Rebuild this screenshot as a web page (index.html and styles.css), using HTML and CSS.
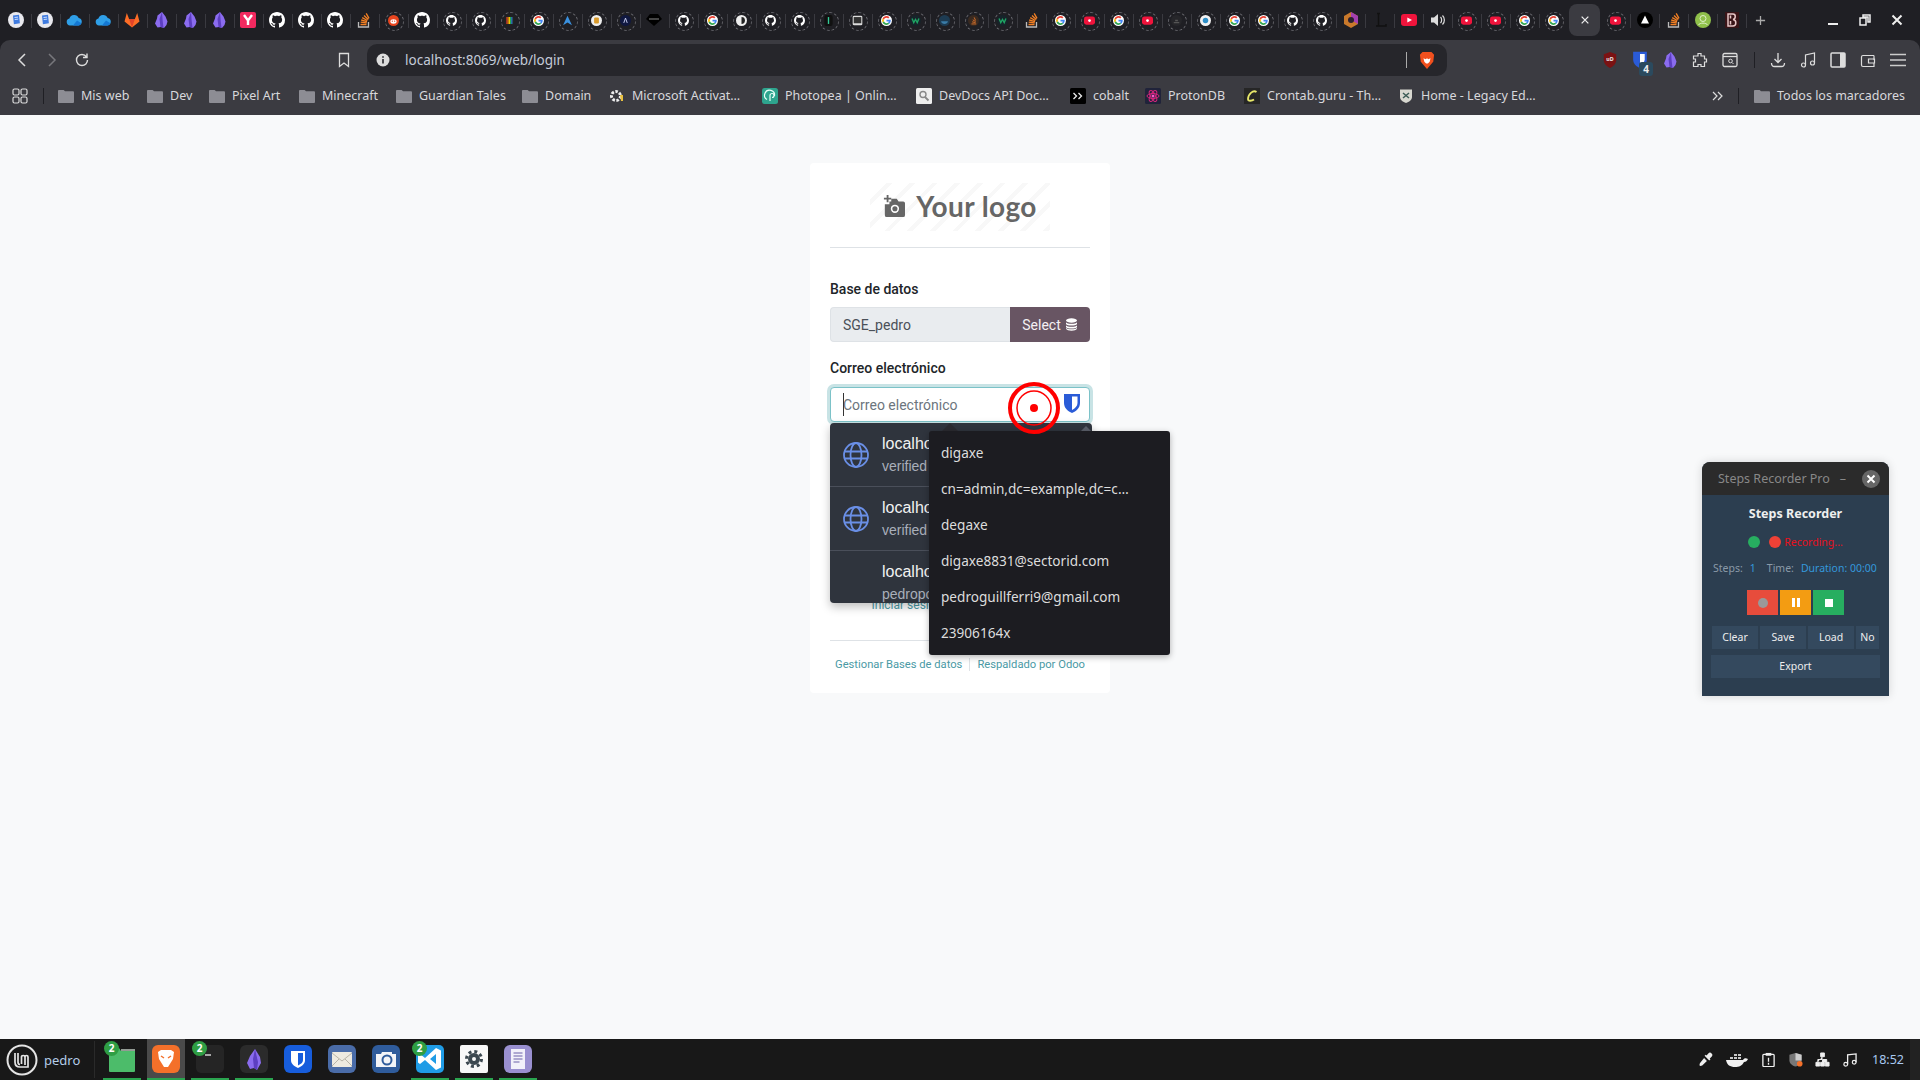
FILE: index.html
```html
<!DOCTYPE html>
<html lang="es">
<head>
  <meta charset="utf-8">
  <title>Odoo - Login</title>
  <link rel="stylesheet" href="styles.css">
</head>
<body>
  <!-- iconos compartidos -->
  <svg class="sprite" aria-hidden="true">
    <symbol id="gh" viewBox="0 0 16 16"><path fill="#fff" d="M8 0C3.58 0 0 3.58 0 8c0 3.54 2.29 6.53 5.47 7.59.4.07.55-.17.55-.38 0-.19-.01-.82-.01-1.49-2.01.37-2.53-.49-2.69-.94-.09-.23-.48-.94-.82-1.13-.28-.15-.68-.52-.01-.53.63-.01 1.08.58 1.23.82.72 1.21 1.87.87 2.33.66.07-.52.28-.87.51-1.07-1.78-.2-3.64-.89-3.64-3.95 0-.87.31-1.59.82-2.15-.08-.2-.36-1.02.08-2.12 0 0 .67-.21 2.2.82.64-.18 1.32-.27 2-.27.68 0 1.36.09 2 .27 1.53-1.04 2.2-.82 2.2-.82.44 1.1.16 1.92.08 2.12.51.56.82 1.27.82 2.15 0 3.07-1.87 3.75-3.65 3.95.29.25.54.73.54 1.48 0 1.07-.01 1.93-.01 2.2 0 .21.15.46.55.38A8.013 8.013 0 0016 8c0-4.42-3.58-8-8-8z"/></symbol>
    <symbol id="goo" viewBox="-6 -6 60 60"><circle cx="24" cy="24" r="30" fill="#fff"/><path fill="#EA4335" d="M24 9.5c3.54 0 6.71 1.22 9.21 3.6l6.85-6.85C35.9 2.38 30.47 0 24 0 14.62 0 6.51 5.38 2.56 13.22l7.98 6.19C12.43 13.72 17.74 9.5 24 9.5z"/><path fill="#4285F4" d="M46.98 24.55c0-1.57-.15-3.09-.38-4.55H24v9.02h12.94c-.58 2.96-2.26 5.48-4.78 7.18l7.73 6c4.51-4.18 7.09-10.36 7.09-17.65z"/><path fill="#FBBC05" d="M10.53 28.59c-.48-1.45-.76-2.99-.76-4.59s.27-3.14.76-4.59l-7.98-6.19C.92 16.46 0 20.12 0 24c0 3.88.92 7.54 2.56 10.78l7.97-6.19z"/><path fill="#34A853" d="M24 48c6.48 0 11.93-2.13 16.03-5.81l-7.73-6c-2.15 1.45-4.92 2.3-8.3 2.3-6.26 0-11.57-4.22-13.47-9.91l-7.98 6.19C6.51 42.62 14.62 48 24 48z"/></symbol>
    <symbol id="yt" viewBox="0 0 16 16"><rect y="2" width="16" height="12" rx="3" fill="#f0143c"/><path d="M6.3 5.4 11 8l-4.7 2.6z" fill="#fff"/></symbol>
    <symbol id="ytr" viewBox="0 0 16 16"><rect y="2" width="16" height="12" rx="3.5" fill="#f0143c"/><circle cx="8" cy="8" r="2" fill="#fff"/></symbol>
    <symbol id="so" viewBox="0 0 16 16"><path d="M2.5 10v5h10v-5" fill="none" stroke="#bcbbbb" stroke-width="1.3"/><path d="M4.5 12.5h6M4.7 10.2l6 .6M5.2 8l5.8 1.6M6.2 5.6l5.2 2.9M8 3.4l4.3 4M10.2 1.4l2.8 5" stroke="#f48024" stroke-width="1.3" fill="none"/></symbol>
    <symbol id="note" viewBox="0 0 16 16"><circle cx="8" cy="8" r="8" fill="#e9e9ee"/><path d="M5 3.5l6-.8.9 8.500-6 1z" fill="#3f7be0"/><path d="M6.5 5.5l3.5-.4M6.7 7.500l3.500-.4" stroke="#cfe0ff"/></symbol>
    <symbol id="cloud" viewBox="0 0 16 16"><path d="M4 13.5a3.5 3.5 0 0 1-.6-6.900A5 5 0 0 1 12.700 6a3.800 3.800 0 0 1-.2 7.500z" fill="#2f9fe8"/><path d="M7 13.5 11 8.500l4 2.500c0 1.500-1 2.500-2.500 2.500z" fill="#1478d4"/></symbol>
    <symbol id="gl" viewBox="0 0 16 16"><path d="M8 15.500 .5 9.500 2.800 1l2.300 6h5.800L13.200 1l2.300 8.500z" fill="#fc6d26"/><path d="M8 15.500 5.100 7h5.800z" fill="#e24329"/></symbol>
    <symbol id="obs" viewBox="0 0 16 16"><path d="M9 0l3.500 4.500 2 5-1 3.500-2.500 3-3-1-3.500.5-2.500-4 2-5 .5-3z" fill="#8b6cef"/><path d="M9 0 6.500 7l1 8 3 1-.8-7z" fill="#5d3fc2"/></symbol>
    <symbol id="yc" viewBox="0 0 16 16"><rect width="16" height="16" rx="2" fill="#f2295f"/><path d="M4 3l4 5.500L12 3M8 8.500V13" fill="none" stroke="#fff" stroke-width="2.400"/></symbol>
    <symbol id="red" viewBox="0 0 16 16"><circle cx="8" cy="8" r="8" fill="#e8451f"/><ellipse cx="8" cy="9.500" rx="4.500" ry="3.200" fill="#fff"/><circle cx="6.300" cy="9" r=".9" fill="#e8451f"/><circle cx="9.700" cy="9" r=".9" fill="#e8451f"/></symbol>
    <symbol id="rbw" viewBox="0 0 16 16"><circle cx="8" cy="8" r="8" fill="#222"/><path d="M3.500 3h1.500v10H3.500z" fill="#e33"/><path d="M5.300 3h1.500v10H5.300z" fill="#f90"/><path d="M7.100 3h1.500v10H7.100z" fill="#fd0"/><path d="M8.900 3h1.500v10H8.900z" fill="#2b5"/><path d="M10.700 3h1.500v10h-1.500z" fill="#38e"/></symbol>
    <symbol id="arch" viewBox="0 0 16 16"><path d="M8 1 14.500 15 8 11 1.500 15z" fill="#3a91e0"/></symbol>
    <symbol id="amb" viewBox="0 0 16 16"><circle cx="8" cy="8" r="8" fill="#eee"/><rect x="4.500" y="3.500" width="7" height="9" rx="1.500" fill="#d99a2b"/></symbol>
    <symbol id="adk" viewBox="0 0 16 16"><circle cx="8" cy="8" r="8" fill="#101840"/><path d="M5.500 11.500 8 4.500l2.500 7" fill="none" stroke="#d6dcff" stroke-width="1.300"/></symbol>
    <symbol id="ec" viewBox="0 0 16 16"><path d="M4 2h8l4 5-8 7-8-7z" fill="#000"/><path d="M3 7h10" stroke="#888"/></symbol>
    <symbol id="half" viewBox="0 0 16 16"><circle cx="8" cy="8" r="8" fill="#eee"/><path d="M8 3a5 5 0 0 1 0 10z" fill="#222"/></symbol>
    <symbol id="tg" viewBox="0 0 16 16"><rect x="2" width="12" height="16" rx="3" fill="#111"/><path d="M8 3v10" stroke="#3c9" stroke-width="2"/></symbol>
    <symbol id="gray" viewBox="0 0 16 16"><rect x="1" y="1" width="14" height="14" rx="2" fill="#ddd"/><rect x="2.500" y="3" width="11" height="9" fill="#333"/></symbol>
    <symbol id="w" viewBox="0 0 16 16"><circle cx="8" cy="8" r="8" fill="#16242a"/><path d="M3 5l2.500 6L8 6.500 10.500 11 13 5" fill="none" stroke="#1fa463" stroke-width="2"/></symbol>
    <symbol id="blu" viewBox="0 0 16 16"><circle cx="8" cy="8" r="8" fill="#1d3b52"/><path d="M3 9h10c-.5 2.500-2.500 4-5 4S3.500 11.500 3 9z" fill="#3a7ca8"/></symbol>
    <symbol id="org" viewBox="0 0 16 16"><circle cx="8" cy="8" r="8" fill="#3a2a20"/><path d="M5 13h7M6 10l5 1M7 7l4 2.500M9 3.500l2 4.500" stroke="#d9712b" stroke-width="1.400"/></symbol>
    <symbol id="drk" viewBox="0 0 16 16"><circle cx="8" cy="8" r="8" fill="#26262a"/><path d="M4 11h8M6 8h4" stroke="#555" stroke-width="2"/></symbol>
    <symbol id="bdot" viewBox="0 0 16 16"><circle cx="8" cy="8" r="8" fill="#f2f2f2"/><circle cx="8" cy="8" r="4" fill="#2f8fc8"/></symbol>
    <symbol id="hex" viewBox="0 0 16 16"><path d="M8 0l7 4v8l-7 4-7-4V4z" fill="#c9792b"/><path d="M8 0l7 4v8l-7-4z" fill="#a43fb0"/><circle cx="8" cy="8" r="3" fill="#2b2030"/></symbol>
    <symbol id="tri" viewBox="0 0 16 16"><circle cx="8" cy="8" r="8" fill="#000"/><path d="M8 3.500l4 8H4z" fill="#fff"/></symbol>
    <symbol id="ava" viewBox="0 0 16 16"><circle cx="8" cy="8" r="8" fill="#8fc04a"/><circle cx="8" cy="6.500" r="3" fill="none" stroke="#dff0c8"/><path d="M3.500 13c1-2.500 8-2.500 9 0" fill="none" stroke="#dff0c8"/></symbol>
    <symbol id="bl" viewBox="0 0 16 16"><rect x="1" width="14" height="16" fill="#3a1518"/><path d="M4 2h5c3 0 3 5 0 5.500 4 .5 3.500 6.500 0 6.500H4zM6.500 3.500v3M6.500 9v3.500" fill="none" stroke="#e8c8c8" stroke-width="1.500"/></symbol>
    <symbol id="ll" viewBox="0 0 16 16"><path d="M5 1.500h3M6.500 1.500V14M4 14h10v-2" fill="none" stroke="#111" stroke-width="1.500"/></symbol>
    <symbol id="shield" viewBox="0 0 18 21"><path d="M1 1h16v9c0 5-4 8.500-8 10-4-1.500-8-5-8-10z" fill="#2a5bd7"/><path d="M9 3.500h5.500V10c0 3-2.500 5.500-5.500 7z" fill="#fff"/></symbol>
    <symbol id="folder" viewBox="0 0 17 15"><path d="M0 2a1 1 0 0 1 1-1h5l1.500 1.500H16a1 1 0 0 1 1 1V14a1 1 0 0 1-1 1H1a1 1 0 0 1-1-1z" fill="#8d8d94"/></symbol>
    <symbol id="globe" viewBox="0 0 26 26"><g fill="none" stroke="#6a8fe6" stroke-width="1.800"><circle cx="13" cy="13" r="12"/><ellipse cx="13" cy="13" rx="5.500" ry="12"/><path d="M1.500 9.500h23M1.500 16.500h23"/></g></symbol>
  </svg>

  <header class="browser">
    <div class="tabstrip">
      <div class="tab"><svg><use href="#note"/></svg></div>
      <div class="tab"><svg><use href="#note"/></svg></div>
      <div class="tab"><svg><use href="#cloud"/></svg></div>
      <div class="tab"><svg><use href="#cloud"/></svg></div>
      <div class="tab"><svg><use href="#gl"/></svg></div>
      <div class="tab"><svg><use href="#obs"/></svg></div>
      <div class="tab"><svg><use href="#obs"/></svg></div>
      <div class="tab"><svg><use href="#obs"/></svg></div>
      <div class="tab"><svg><use href="#yc"/></svg></div>
      <div class="tab"><svg><use href="#gh"/></svg></div>
      <div class="tab"><svg><use href="#gh"/></svg></div>
      <div class="tab"><svg><use href="#gh"/></svg></div>
      <div class="tab"><svg><use href="#so"/></svg></div>
      <div class="tab ring"><svg><use href="#red"/></svg></div>
      <div class="tab"><svg><use href="#gh"/></svg></div>
      <div class="tab ring"><svg><use href="#gh"/></svg></div>
      <div class="tab ring"><svg><use href="#gh"/></svg></div>
      <div class="tab ring"><svg><use href="#rbw"/></svg></div>
      <div class="tab ring"><svg><use href="#goo"/></svg></div>
      <div class="tab ring"><svg><use href="#arch"/></svg></div>
      <div class="tab ring"><svg><use href="#amb"/></svg></div>
      <div class="tab ring"><svg><use href="#adk"/></svg></div>
      <div class="tab"><svg><use href="#ec"/></svg></div>
      <div class="tab ring"><svg><use href="#gh"/></svg></div>
      <div class="tab ring"><svg><use href="#goo"/></svg></div>
      <div class="tab ring"><svg><use href="#half"/></svg></div>
      <div class="tab ring"><svg><use href="#gh"/></svg></div>
      <div class="tab ring"><svg><use href="#gh"/></svg></div>
      <div class="tab ring"><svg><use href="#tg"/></svg></div>
      <div class="tab ring"><svg><use href="#gray"/></svg></div>
      <div class="tab ring"><svg><use href="#goo"/></svg></div>
      <div class="tab ring"><svg><use href="#w"/></svg></div>
      <div class="tab ring"><svg><use href="#blu"/></svg></div>
      <div class="tab ring"><svg><use href="#org"/></svg></div>
      <div class="tab ring"><svg><use href="#w"/></svg></div>
      <div class="tab"><svg><use href="#so"/></svg></div>
      <div class="tab ring"><svg><use href="#goo"/></svg></div>
      <div class="tab ring"><svg><use href="#ytr"/></svg></div>
      <div class="tab ring"><svg><use href="#goo"/></svg></div>
      <div class="tab ring"><svg><use href="#ytr"/></svg></div>
      <div class="tab ring"><svg><use href="#drk"/></svg></div>
      <div class="tab ring"><svg><use href="#bdot"/></svg></div>
      <div class="tab ring"><svg><use href="#goo"/></svg></div>
      <div class="tab ring"><svg><use href="#goo"/></svg></div>
      <div class="tab ring"><svg><use href="#gh"/></svg></div>
      <div class="tab ring"><svg><use href="#gh"/></svg></div>
      <div class="tab"><svg><use href="#hex"/></svg></div>
      <div class="tab"><svg><use href="#ll"/></svg></div>
      <div class="tab"><svg><use href="#yt"/></svg></div>
      <div class="tab"><svg viewBox="0 0 16 16"><path d="M1 5.500h3L8 2v12l-4-3.500H1z" fill="#ddd"/><path d="M10.500 5c1.500 1.500 1.500 4.500 0 6M12.500 3.500c2.500 2.500 2.500 6.500 0 9" fill="none" stroke="#ddd" stroke-width="1.200"/></svg></div>
      <div class="tab ring"><svg><use href="#ytr"/></svg></div>
      <div class="tab ring"><svg><use href="#ytr"/></svg></div>
      <div class="tab ring"><svg><use href="#goo"/></svg></div>
      <div class="tab ring"><svg><use href="#goo"/></svg></div>
      <div class="tab active"><svg viewBox="0 0 12 12"><path d="M2 2l8 8M10 2l-8 8" stroke="#eee" stroke-width="1.500"/></svg></div>
      <div class="tab ring"><svg><use href="#ytr"/></svg></div>
      <div class="tab"><svg><use href="#tri"/></svg></div>
      <div class="tab"><svg><use href="#so"/></svg></div>
      <div class="tab"><svg><use href="#ava"/></svg></div>
      <div class="tab"><svg><use href="#bl"/></svg></div>
      <div class="tab newtab"><svg viewBox="0 0 12 12"><path d="M6 1v10M1 6h10" stroke="#aaa" stroke-width="1.400"/></svg></div>
      <div class="winctl">
        <svg viewBox="0 0 12 12"><path d="M1 10h10" stroke="#eee" stroke-width="2"/></svg>
        <svg viewBox="0 0 12 12"><path d="M4 1h7v7H9V3H4zM1 4h6v7H1z" fill="none" stroke="#eee" stroke-width="1.500"/></svg>
        <svg viewBox="0 0 12 12"><path d="M1.500 1.500l9 9M10.500 1.500l-9 9" stroke="#eee" stroke-width="2"/></svg>
      </div>
    </div>

    <div class="toolbar">
      <button class="tool"><svg viewBox="0 0 16 16"><path d="M11 2 5 8l6 6" fill="none" stroke="#ddd" stroke-width="1.500"/></svg></button>
      <button class="tool"><svg viewBox="0 0 16 16"><path d="M5 2l6 6-6 6" fill="none" stroke="#77777c" stroke-width="1.500"/></svg></button>
      <button class="tool"><svg viewBox="0 0 16 16"><path d="M13.500 8A5.500 5.500 0 1 1 8 2.500c2 0 3.500 1 4.500 2.500M13 1.500V5.500H9" fill="none" stroke="#ddd" stroke-width="1.400"/></svg></button>
      <button class="tool bookmark"><svg viewBox="0 0 16 16"><path d="M3.500 1.500h9V14.500L8 11l-4.500 3.500z" fill="none" stroke="#ddd" stroke-width="1.300"/></svg></button>
      <div class="omnibox">
        <svg class="info" viewBox="0 0 14 14"><circle cx="7" cy="7" r="6.500" fill="#ddd"/><path d="M7 6v4.500M7 3.200v1.500" stroke="#26262b" stroke-width="1.600"/></svg>
        <span class="url">localhost:8069/web/login</span>
        <span class="omni-div"></span>
        <svg class="lion" viewBox="0 0 18 21"><path d="M4 1h10l3 3-1 8-7 8-7-8-1-8z" fill="#f1501e"/><path d="M5 8l2.500 1L9 8l1.500 1L13 8l-1 4-2 2H8l-2-2z" fill="#fff"/></svg>
      </div>
      <button class="tool ext-first"><svg viewBox="0 0 16 18"><path d="M8 0l7 2.500V9c0 4-3 7-7 9-4-2-7-5-7-9V2.500z" fill="#7a1213"/><text x="8" y="10.500" class="ublock">uD</text></svg></button>
      <button class="tool badged"><svg><use href="#shield"/></svg><span class="badge">4</span></button>
      <button class="tool"><svg><use href="#obs"/></svg></button>
      <button class="tool"><svg viewBox="0 0 16 16"><path d="M6 1.500h3v2.500h3.500v3h2v3h-2v4.500H9v-2H6v2H1.500V10h2V7h-2V4H6z" fill="none" stroke="#ddd" stroke-width="1.200"/></svg></button>
      <button class="tool"><svg viewBox="0 0 16 16"><rect x="1" y="1.500" width="14" height="13" rx="1.500" fill="none" stroke="#ddd" stroke-width="1.300"/><path d="M1 4.500h14" stroke="#ddd" stroke-width="1.300"/><circle cx="8.500" cy="9" r="1.800" fill="none" stroke="#ddd"/><path d="M10 10.500l1.500 1.500" stroke="#ddd"/></svg></button>
      <span class="tool-div"></span>
      <button class="tool"><svg viewBox="0 0 16 16"><path d="M8 1v9M4.500 7 8 10.500 11.500 7M1.500 11c0 2 1 3.500 3 3.500h7c2 0 3-1.500 3-3.500" fill="none" stroke="#ddd" stroke-width="1.300"/></svg></button>
      <button class="tool"><svg viewBox="0 0 16 16"><circle cx="3.500" cy="13" r="2" fill="none" stroke="#ddd" stroke-width="1.200"/><circle cx="12.500" cy="11" r="2" fill="none" stroke="#ddd" stroke-width="1.200"/><path d="M5.500 13V3l9-2v10" fill="none" stroke="#ddd" stroke-width="1.200"/></svg></button>
      <button class="tool"><svg viewBox="0 0 16 16"><rect x="1" y="1" width="14" height="14" rx="1" fill="none" stroke="#ddd" stroke-width="1.500"/><rect x="10" y="1" width="5" height="14" fill="#ddd"/></svg></button>
      <button class="tool"><svg viewBox="0 0 16 16"><path d="M14 3.500H3A1.500 1.500 0 0 0 1.500 5v8A1.500 1.500 0 0 0 3 14.500h11V11M14 8V3.500M8.500 7h6v4h-6z" fill="none" stroke="#ddd" stroke-width="1.200"/></svg></button>
      <button class="tool"><svg viewBox="0 0 16 16"><path d="M0 2.500h16M0 8h16M0 13.500h16" stroke="#ccc" stroke-width="1.500"/></svg></button>
    </div>

    <nav class="bookmarks">
      <span class="bm apps"><svg viewBox="0 0 16 16"><g fill="none" stroke="#ddd" stroke-width="1.200"><rect x="1" y="1" width="6" height="6" rx="1.500"/><rect x="9" y="1" width="6" height="6" rx="1.500"/><rect x="1" y="9" width="6" height="6" rx="1.500"/><rect x="9" y="9" width="6" height="6" rx="1.500"/></g></svg></span>
      <span class="bm-div"></span>
      <span class="bm"><svg><use href="#folder"/></svg>Mis web</span>
      <span class="bm"><svg><use href="#folder"/></svg>Dev</span>
      <span class="bm"><svg><use href="#folder"/></svg>Pixel Art</span>
      <span class="bm"><svg><use href="#folder"/></svg>Minecraft</span>
      <span class="bm"><svg><use href="#folder"/></svg>Guardian Tales</span>
      <span class="bm"><svg><use href="#folder"/></svg>Domain</span>
      <span class="bm"><svg viewBox="0 0 16 16"><circle cx="7" cy="8" r="4.500" fill="none" stroke="#eee" stroke-width="3" stroke-dasharray="2.500 1.500"/><path d="M11 7h3v6h-2z" fill="#e8c040"/></svg>Microsoft Activat…</span>
      <span class="bm"><svg viewBox="0 0 16 16"><rect width="16" height="16" rx="2.500" fill="#2ea58e"/><path d="M8 13V7.500a2 2 0 1 1 2 2M5 11.500A5 5 0 1 1 12.500 8" fill="none" stroke="#e8fff8" stroke-width="1.200"/></svg>Photopea | Onlin…</span>
      <span class="bm"><svg viewBox="0 0 16 16"><rect width="16" height="16" rx="1.500" fill="#eee"/><circle cx="7" cy="6.500" r="3" fill="none" stroke="#888" stroke-width="1.400"/><path d="M9 9l3.500 3.500" stroke="#888" stroke-width="1.800"/></svg>DevDocs API Doc…</span>
      <span class="bm"><svg viewBox="0 0 16 16"><rect width="16" height="16" rx="1.500" fill="#000"/><path d="M3.500 5l3 3-3 3M8.500 5l3 3-3 3" fill="none" stroke="#eee" stroke-width="1.300"/></svg>cobalt</span>
      <span class="bm"><svg viewBox="0 0 16 16"><rect width="16" height="16" rx="1.500" fill="#20233a"/><g fill="none" stroke="#d6247c"><ellipse cx="8" cy="8" rx="6" ry="2.500"/><ellipse cx="8" cy="8" rx="6" ry="2.500" transform="rotate(60 8 8)"/><ellipse cx="8" cy="8" rx="6" ry="2.500" transform="rotate(120 8 8)"/></g><circle cx="8" cy="8" r="1.500" fill="#f5c"/></svg>ProtonDB</span>
      <span class="bm"><svg viewBox="0 0 16 16"><rect width="16" height="16" fill="#262626"/><path d="M12.500 4C9 1.500 4 6.500 4 11c0 2.500 4 2 6 .5" fill="none" stroke="#e8e86a" stroke-width="1.800"/></svg>Crontab.guru - Th…</span>
      <span class="bm"><svg viewBox="0 0 16 16"><path d="M2 1.500h12V9c0 3-3 5-6 6-3-1-6-3-6-6z" fill="#d8d8d0"/><path d="M5 5l6 5M11 5l-6 5" stroke="#3b5b55" stroke-width="1.500"/></svg>Home - Legacy Ed…</span>
      <span class="bm-end">
        <svg class="chev" viewBox="0 0 12 12"><path d="M2 2l4 4-4 4M7 2l4 4-4 4" fill="none" stroke="#ddd" stroke-width="1.200"/></svg>
        <span class="bm-div"></span>
        <span class="bm"><svg><use href="#folder"/></svg>Todos los marcadores</span>
      </span>
    </nav>
  </header>

  <main class="page">
    <div class="card">
      <div class="logo">
        <svg class="logo-cam" viewBox="0 0 24 24"><path d="M4 0v3H1v2h3v3h2V5h3V3H6V0z" fill="#666"/><path d="M9 4h6l2 3h5a2 2 0 0 1 2 2v13a2 2 0 0 1-2 2H4a2 2 0 0 1-2-2V10h5V7h2z" fill="#666"/><circle cx="13" cy="15" r="4.500" fill="#fff"/><circle cx="13" cy="15" r="2.800" fill="#666"/></svg>
        <span>Your logo</span>
      </div>

      <form class="login">
        <label class="lbl">Base de datos</label>
        <div class="db-row">
          <input class="db-input" value="SGE_pedro" readonly>
          <a class="db-btn">Select <svg viewBox="0 0 13 13"><g fill="#fff"><ellipse cx="6.500" cy="2.500" rx="5.500" ry="2.200"/><path d="M1 4.200c1 2 10 2 11 0V6c-1 2-10 2-11 0zM1 7.200c1 2 10 2 11 0V9c-1 2-10 2-11 0zM1 9.800c1 2 10 2 11 0v1c-1 2.500-10 2.500-11 0z"/></g></svg></a>
        </div>

        <label class="lbl lbl-email">Correo electrónico</label>
        <div class="email">
          <input class="email-input" placeholder="Correo electrónico">
          <span class="caret"></span>
          <svg class="bw"><use href="#shield"/></svg>
        </div>

        <!-- contraseña y boton quedan tapados por los menus -->
        <input class="pass-input" type="password">
        <button class="login-btn" type="button"></button>
        <a class="oauth">Iniciar sesión como superusuario</a>
      </form>

      <div class="card-foot">
        <a>Gestionar Bases de datos</a>
        <a>Respaldado por Odoo</a>
      </div>
    </div>
  </main>

  <!-- menu de bitwarden sobre el input -->
  <div class="bw-menu">
    <div class="bw-row"><svg><use href="#globe"/></svg><div><b>localho</b><small>verified</small></div></div>
    <div class="bw-row"><svg><use href="#globe"/></svg><div><b>localho</b><small>verified</small></div></div>
    <div class="bw-row"><svg></svg><div><b>localho</b><small>pedropo</small></div></div>
    <span class="bw-arrow"></span>
  </div>

  <span class="ctx-tip"></span>
  <ul class="ctx-menu">
    <li>digaxe</li>
    <li>cn=admin,dc=example,dc=c…</li>
    <li>degaxe</li>
    <li>digaxe8831@sectorid.com</li>
    <li>pedroguillferri9@gmail.com</li>
    <li>23906164x</li>
  </ul>

  <svg class="rec-ring" viewBox="0 0 54 54">
    <circle cx="27" cy="27" r="24" fill="none" stroke="#f00" stroke-width="4"/>
    <circle cx="27" cy="27" r="17" fill="none" stroke="#f00" stroke-width="1.500"/>
    <circle cx="27" cy="27" r="4" fill="#f00"/>
  </svg>

  <aside class="steps">
    <div class="steps-head">
      <span class="steps-title">Steps Recorder Pro</span>
      <span class="steps-min">–</span>
      <span class="steps-close"><svg viewBox="0 0 10 10"><path d="M1.500 1.500l7 7M8.500 1.500l-7 7" stroke="#fff" stroke-width="2"/></svg></span>
    </div>
    <div class="steps-body">
      <h3>Steps Recorder</h3>
      <div class="steps-status"><i class="dot-green"></i><i class="dot-red"></i><span>Recording...</span></div>
      <div class="steps-stats"><span>Steps:</span><b>1</b><span>Time:</span><b>Duration: 00:00</b></div>
      <div class="steps-ctl">
        <span class="ctl-rec"><i></i></span>
        <span class="ctl-pause"><i></i><i></i></span>
        <span class="ctl-stop"><i></i></span>
      </div>
      <div class="steps-acts"><span>Clear</span><span>Save</span><span>Load</span><span class="cut">No</span></div>
      <div class="steps-export">Export</div>
    </div>
  </aside>

  <footer class="taskbar">
    <div class="menu-btn">
      <svg viewBox="0 0 32 32"><circle cx="16" cy="16" r="14.500" fill="none" stroke="#e4e4e4" stroke-width="2"/><path d="M9 9v9c0 3 2 5 5 5h8V13c0-2-3-2-3 0v8M12 9v9c0 1.500 1 2.500 2 2.500M15.500 20v-7c0-2 3.500-2 3.500 0" fill="none" stroke="#e4e4e4" stroke-width="1.700"/></svg>
      <span>pedro</span>
    </div>
    <span class="task-div"></span>
    <div class="launcher on"><i class="count">2</i><svg viewBox="0 0 28 28"><path d="M1 3h10l2 3h14v20a1 1 0 0 1-1 1H2a1 1 0 0 1-1-1z" fill="#4cbc6a"/><path d="M13 5h14" stroke="#e8f5ea" stroke-width="1.200"/></svg></div>
    <div class="launcher on cur"><svg viewBox="0 0 28 28"><rect width="28" height="28" rx="6" fill="#f4702a"/><path d="M6 7l3-2h10l3 2-1 7-5 8h-4l-5-8z" fill="#fff"/><path d="M9 11l3 2M19 11l-3 2" stroke="#f4702a" stroke-width="1.500"/></svg></div>
    <div class="launcher on"><i class="count">2</i><svg viewBox="0 0 28 28"><rect width="28" height="28" rx="5" fill="#252525"/><path d="M9 10h6" stroke="#eee" stroke-width="1.300"/></svg></div>
    <div class="launcher on"><svg viewBox="0 0 28 28"><rect width="28" height="28" rx="6" fill="#2b2b2b"/><path d="M15 4l5 8 1 6-4 7-3-2-4 1-3-6 3-7z" fill="#8b6cef"/><path d="M15 4l-2 10 1 9 3 2 1-8z" fill="#5d3fc2"/></svg></div>
    <div class="launcher"><svg viewBox="0 0 28 28"><rect width="28" height="28" rx="6" fill="#175ddc"/><path d="M7 6h14v9c0 4-3 6-7 8-4-2-7-4-7-8z" fill="#fff"/><path d="M14 8h5v7c0 2.500-2 4-5 5.500z" fill="#175ddc"/></svg></div>
    <div class="launcher"><svg viewBox="0 0 28 28"><rect width="28" height="28" rx="6" fill="#4a6ca8"/><rect x="4" y="7" width="20" height="15" rx="1" fill="#eeeae0"/><path d="M4 8l10 8 10-8M4 21l7-7M24 21l-7-7" fill="none" stroke="#b8b4a8"/></svg></div>
    <div class="launcher"><svg viewBox="0 0 28 28"><rect width="28" height="28" rx="6" fill="#2f5c9c"/><path d="M4 9h5l1-2h10v2h4v13H4z" fill="#f2f4f8"/><circle cx="15" cy="15" r="4.500" fill="none" stroke="#2f5c9c" stroke-width="2"/></svg></div>
    <div class="launcher on"><i class="count">2</i><svg viewBox="0 0 28 28"><rect width="28" height="28" rx="5" fill="#1f9ce6"/><path d="M20 3l5 2.500v17L20 25 9 15l-5 4-2-1.500V10.500L4 9l5 4zM20 9l-6 5 6 5z" fill="#fff"/></svg></div>
    <div class="launcher on"><svg viewBox="0 0 28 28"><rect width="28" height="28" rx="2" fill="#f8f8f8"/><circle cx="14" cy="14" r="4" fill="none" stroke="#3c4850" stroke-width="4"/><circle cx="14" cy="14" r="7.500" fill="none" stroke="#3c4850" stroke-width="3" stroke-dasharray="3 2.900"/></svg></div>
    <div class="launcher on"><svg viewBox="0 0 28 28"><rect width="28" height="28" rx="6" fill="#9a90d0"/><rect x="7" y="4" width="14" height="20" fill="#f2f1fa"/><path d="M9.500 8h9M9.500 11h9M9.500 14h9M9.500 17h6" stroke="#6a60a8"/></svg></div>

    <div class="tray">
      <svg viewBox="0 0 16 16"><path d="M11 1.500a2 2 0 0 1 3.500 3.500l-2 2 .8.800-1.300 1.300-5-5L8.300 3l.8.800zM6.500 6.500l3 3L4.500 14.500l-2 .5-1-1 .5-2z" fill="#eee"/></svg>
      <svg class="tray-docker" viewBox="0 0 24 16"><path d="M1 8h17c1-2 3-2 5-1-1 2-2 3-4 3-2 4-5 5-9 5-5 0-8-2-9-7z" fill="#f2f2f2"/><path d="M5 5h3v2H5zM9 5h3v2H9zM13 5h3v2h-3zM9 2h3v2H9zM13 2h3v2h-3z" fill="#c8c8c8"/></svg>
      <svg viewBox="0 0 16 16"><rect x="2" y="2.500" width="12" height="13" rx="1" fill="none" stroke="#eee" stroke-width="1.400"/><rect x="5" y="1" width="6" height="3" fill="#eee"/><path d="M8 6v4.500M8 11.500v2" stroke="#eee" stroke-width="1.400"/></svg>
      <svg viewBox="0 0 16 16"><path d="M8 1l6.500 2v6c0 3-3 5.500-6.500 6.500C4.500 14.500 1.500 12 1.500 9V3z" fill="#777"/><path d="M8 1l6.500 2v6H8z" fill="#ccc"/><circle cx="12.500" cy="12.500" r="3" fill="#f4702a"/></svg>
      <svg viewBox="0 0 16 16"><path d="M6 1h4v4H6zM1 11h4v4H1zM6 11h4v4H6zM11 11h4v4h-4zM7.500 5v3H3v3M12.500 11V8H8v3" fill="#eee" stroke="#eee"/></svg>
      <svg viewBox="0 0 16 16"><circle cx="4" cy="13" r="2" fill="none" stroke="#eee" stroke-width="1.300"/><circle cx="13" cy="11" r="2" fill="none" stroke="#eee" stroke-width="1.300"/><path d="M6 13V3l9-1v9" fill="none" stroke="#eee" stroke-width="1.400"/></svg>
      <span class="clock">18:52</span>
      <span class="show-desk"></span>
    </div>
  </footer>
</body>
</html>
```
FILE: styles.css
```css
/* Base */
* {
  box-sizing: border-box;
}

html, body {
  height: 100%;
}

body {
  margin: 0;
  display: flex;
  flex-direction: column;
  height: 1080px;
  overflow: hidden;
  position: relative;
  background-color: #f8f9fa;
  font-family: Roboto, sans-serif;
  font-size: 14px;
}

.sprite {
  display: none;
}

/* Tabs */
.browser {
  flex: none;
  background-color: #1f1f24;
  color: #ddd;
  font-family: "Noto Sans", sans-serif;
}

.tabstrip {
  display: flex;
  align-items: center;
  height: 40px;
  padding-left: 1.5px;
}

.tab {
  position: relative;
  flex: none;
  display: flex;
  align-items: center;
  justify-content: center;
  width: 29.03px;
  height: 40px;
}

.tab svg {
  width: 16px;
  height: 16px;
}

.tab + .tab::before {
  content: "";
  position: absolute;
  left: 0;
  top: 14px;
  height: 14px;
  width: 1px;
  background-color: #3a3a40;
}

.tab.ring svg {
  width: 11px;
  height: 11px;
}

.tab.ring::after {
  content: "";
  position: absolute;
  left: 6px;
  top: 11.5px;
  width: 17px;
  height: 17px;
  border: 1.5px dashed #6a6a70;
  border-radius: 50%;
}

.tab.active {
  width: 31px;
  height: 32px;
  margin: 0 1px;
  border-radius: 8px;
  background-color: #3b3b41;
}

.tab.active svg {
  width: 10px;
  height: 10px;
}

.tab.active::before,
.tab.active + .tab::before {
  display: none;
}

.tab.newtab svg {
  width: 11px;
  height: 11px;
}

.winctl {
  display: flex;
  align-items: center;
  gap: 20px;
  margin-left: 52px;
}

.winctl svg {
  width: 12px;
  height: 12px;
}

/* Barra de direcciones */
.toolbar {
  display: flex;
  align-items: center;
  height: 38px;
  padding: 2px 0 0 7px;
  background-color: #3b3b41;
  border-radius: 10px 10px 0 0;
}

.tool {
  position: relative;
  flex: none;
  display: flex;
  align-items: center;
  justify-content: center;
  width: 30px;
  height: 32px;
  padding: 0;
  border: none;
  background: none;
}

.tool svg {
  width: 16px;
  height: 16px;
}

.tool.bookmark {
  margin-left: 232px;
}

.omnibox {
  flex: none;
  display: flex;
  align-items: center;
  width: 1080px;
  height: 32px;
  margin-left: 8px;
  padding-left: 9px;
  background-color: #26262b;
  border-radius: 10px;
}

.info {
  width: 14px;
  height: 14px;
}

.url {
  margin-left: 15px;
  font-size: 13.5px;
  color: #c4cbd8;
}

.omni-div {
  width: 1px;
  height: 16px;
  margin-left: auto;
  background-color: #aaa;
}

.lion {
  width: 16px;
  height: 19px;
  margin: 0 12px 0 12px;
}

.ext-first {
  margin-left: 148px;
}

.ublock {
  fill: #eee;
  font: bold 6px "Noto Sans", sans-serif;
  text-anchor: middle;
}

.badged svg {
  width: 16px;
  height: 18px;
}

.badge {
  position: absolute;
  right: 2px;
  bottom: 0;
  width: 14px;
  height: 14px;
  border-radius: 3px;
  background-color: #2b4a5e;
  color: #eee;
  font-family: "Noto Sans", sans-serif;
  font-size: 10px;
  font-weight: 700;
  line-height: 14px;
  text-align: center;
}

.tool-div {
  flex: none;
  width: 1px;
  height: 16px;
  margin: 0 8px 0 9px;
  background-color: #1f1f24;
}

/* Marcadores */
.bookmarks {
  display: grid;
  grid-template-columns: 35px 15px 89px 62px 90px 97px 126px 87px 153px 154px 154px 75px 99px 154px 162px 1fr;
  align-items: center;
  height: 37px;
  padding-left: 8px;
  padding-bottom: 2px;
  background-color: #3b3b41;
  font-size: 12.5px;
  color: #d8d8dc;
}

.bm {
  display: flex;
  align-items: center;
  gap: 7px;
  white-space: nowrap;
}

.bm svg {
  flex: none;
  width: 16px;
  height: 16px;
}

.bm.apps svg {
  margin-left: 4px;
}

.bm-div {
  display: block;
  width: 1px;
  height: 16px;
  background-color: #1f1f24;
}

.bm-end {
  display: flex;
  align-items: center;
  justify-content: flex-end;
  gap: 15px;
  padding-right: 15px;
}

.chev {
  width: 12px;
  height: 12px;
}

/* Login */
.page {
  flex: 1;
  display: flex;
  justify-content: center;
  align-items: flex-start;
  padding-top: 48px;
}

.card {
  width: 300px;
  height: 530px;
  padding: 20px;
  background-color: #fff;
  border-radius: 4px;
}

.logo {
  display: flex;
  align-items: center;
  justify-content: center;
  gap: 11px;
  height: 65px;
  padding-bottom: 18px;
  border-bottom: 1px solid #dee2e6;
  background-image: repeating-linear-gradient(135deg, #fff 0, #fff 12px, #f8f8f8 12px, #f8f8f8 16px);
  background-size: 180px 48px;
  background-position: center top;
  background-repeat: no-repeat;
  color: #666;
  font-family: Lato, sans-serif;
  font-size: 28px;
  font-weight: 700;
  letter-spacing: .4px;
}

.logo-cam {
  width: 22px;
  height: 22px;
}

.login {
  display: flex;
  flex-direction: column;
  padding-top: 33px;
}

.lbl {
  margin-bottom: 9px;
  height: 17px;
  line-height: 17px;
  font-weight: 500;
  color: #212529;
}

.lbl-email {
  margin-bottom: 10px;
}

.db-row {
  display: flex;
  height: 35px;
  margin-bottom: 18px;
}

.db-input {
  flex: 1;
  min-width: 0;
  padding: 0 12px;
  border: 1px solid #dee2e6;
  border-right: none;
  border-radius: 4px 0 0 4px;
  background-color: #e9ecef;
  color: #4a5058;
  font: 14px Roboto, sans-serif;
}

.db-btn {
  display: flex;
  align-items: center;
  justify-content: center;
  gap: 4px;
  width: 80px;
  border-radius: 0 4px 4px 0;
  background-color: #685563;
  color: #f4f0f3;
  font-size: 14px;
}

.db-btn svg {
  width: 13px;
  height: 13px;
}

.email {
  position: relative;
  height: 35px;
  margin-bottom: 42px;
}

.email-input {
  width: 100%;
  height: 100%;
  padding: 0 12px;
  border: 1px solid #7cc2c8;
  border-radius: 4px;
  box-shadow: 0 0 0 3px #c8e3e5;
  background-color: #fff;
  font: 14px Roboto, sans-serif;
}

.email-input::placeholder {
  color: #6c757d;
}

.caret {
  position: absolute;
  left: 13px;
  top: 6px;
  width: 1px;
  height: 23px;
  background-color: #333;
}

.bw {
  position: absolute;
  right: 9px;
  top: 6px;
  width: 18px;
  height: 21px;
}

.pass-input {
  height: 35px;
  margin-bottom: 16px;
  border: 1px solid #dee2e6;
}

.login-btn {
  height: 35px;
  margin-bottom: 46px;
  border: none;
  background-color: #714b67;
  color: #fff;
}

.oauth {
  margin-top: 2px;
  height: 14px;
  line-height: 14px;
  text-align: center;
  white-space: nowrap;
  font-size: 12px;
  color: #4a9aa5;
}

.card-foot {
  display: flex;
  justify-content: center;
  margin-top: 28px;
  padding-top: 17px;
  border-top: 1px solid #dee2e6;
  font-size: 11.2px;
  color: #4a9aa5;
}

.card-foot a + a {
  margin-left: 7px;
  padding-left: 7px;
  border-left: 1px solid #dee2e6;
}

/* Menu de bitwarden */
.bw-menu {
  position: absolute;
  left: 830px;
  top: 423px;
  width: 262px;
  height: 180px;
  overflow: hidden;
  border-radius: 4px;
  background-color: #2f343d;
  box-shadow: 0 4px 10px rgba(0, 0, 0, .25);
  font-family: "Liberation Sans", sans-serif;
}

.bw-row {
  display: flex;
  align-items: center;
  gap: 13px;
  height: 64px;
  padding-left: 13px;
  border-bottom: 1px solid #4a4f5a;
}

.bw-row svg {
  flex: none;
  width: 26px;
  height: 26px;
}

.bw-row b {
  display: block;
  font-size: 16px;
  font-weight: 400;
  color: #f2f2f2;
}

.bw-row small {
  display: block;
  margin-top: 5px;
  font-size: 14px;
  color: #a9afba;
}

.bw-arrow {
  position: absolute;
  right: 1px;
  top: 3px;
  border: 5px solid transparent;
  border-top: none;
  border-bottom-color: #5a5f6a;
}

/* Menu contextual */
.ctx-tip {
  position: absolute;
  left: 942px;
  top: 423px;
  border: 8px solid transparent;
  border-top: none;
  border-bottom-color: #2a2a30;
}

.ctx-menu {
  position: absolute;
  left: 929px;
  top: 431px;
  width: 241px;
  height: 224px;
  margin: 0;
  padding: 4px 0;
  list-style: none;
  border-radius: 3px;
  background-color: #1c1c21;
  box-shadow: 0 2px 6px rgba(0, 0, 0, .3);
  font-family: "Noto Sans", sans-serif;
  font-size: 13.6px;
  color: #ddd;
}

.ctx-menu li {
  height: 36px;
  padding-left: 12px;
  line-height: 36px;
  white-space: nowrap;
}

.rec-ring {
  position: absolute;
  left: 1007px;
  top: 381px;
  width: 54px;
  height: 54px;
}

/* Steps Recorder */
.steps {
  position: absolute;
  left: 1702px;
  top: 462px;
  width: 187px;
  height: 234px;
  overflow: hidden;
  border-radius: 8px 8px 0 0;
  background-color: #2c3e50;
  box-shadow: 0 0 10px rgba(0, 0, 0, .15);
  font-family: "Noto Sans", sans-serif;
  font-size: 10.5px;
  color: #eee;
}

.steps-head {
  display: flex;
  align-items: center;
  height: 33px;
  padding: 0 9px 0 16px;
  background-color: #2b2b2b;
  color: #888;
  font-size: 12.5px;
}

.steps-min {
  margin-left: 10px;
}

.steps-close {
  display: flex;
  align-items: center;
  justify-content: center;
  width: 18px;
  height: 18px;
  margin-left: auto;
  border-radius: 50%;
  background-color: #666;
}

.steps-close svg {
  width: 10px;
  height: 10px;
}

.steps-body {
  display: flex;
  flex-direction: column;
  align-items: center;
}

.steps-body h3 {
  margin: 10px 0 0;
  font-size: 12.5px;
  font-weight: 700;
  line-height: 18px;
}

.steps-status {
  display: flex;
  align-items: center;
  height: 18px;
  margin-top: 10px;
  color: #e8101e;
}

.steps-status i {
  width: 12px;
  height: 12px;
  border-radius: 50%;
}

.dot-green {
  background-color: #27ae60;
  margin-right: 9px;
}

.dot-red {
  background-color: #ef4136;
  margin-right: 3px;
}

.steps-stats {
  display: flex;
  align-self: flex-start;
  height: 15px;
  margin: 10px 0 0 11px;
  color: #8a9aa8;
  line-height: 15px;
}

.steps-stats b {
  margin-left: 7px;
  margin-right: 11px;
  font-weight: 400;
  color: #3498db;
}

.steps-stats b:last-child {
  margin-right: 0;
}

.steps-ctl {
  display: flex;
  gap: 2px;
  margin-top: 14px;
}

.steps-ctl span {
  display: flex;
  align-items: center;
  justify-content: center;
  gap: 2px;
  width: 31px;
  height: 25px;
}

.ctl-rec {
  background-color: #e74c3c;
}

.ctl-rec i {
  width: 10px;
  height: 10px;
  border-radius: 50%;
  background-color: #999;
}

.ctl-pause {
  background-color: #f39c12;
}

.ctl-pause i {
  width: 3px;
  height: 9px;
  background-color: #fff;
}

.ctl-stop {
  background-color: #27ae60;
}

.ctl-stop i {
  width: 8px;
  height: 8px;
  background-color: #fff;
}

.steps-acts {
  display: flex;
  align-self: flex-start;
  gap: 2px;
  margin: 11px 0 0 10px;
}

.steps-acts span {
  width: 46px;
  height: 23px;
  background-color: #34495e;
  line-height: 23px;
  text-align: center;
}

.steps-acts .cut {
  width: 23px;
}

.steps-export {
  align-self: flex-start;
  width: 169px;
  height: 23px;
  margin: 6px 0 0 9px;
  background-color: #34495e;
  line-height: 23px;
  text-align: center;
}

/* Panel de Mint */
.taskbar {
  flex: none;
  position: relative;
  display: flex;
  align-items: stretch;
  height: 41px;
  background-color: #181818;
  font-family: "Noto Sans", sans-serif;
}

.menu-btn {
  display: flex;
  align-items: center;
  gap: 6px;
  width: 94px;
  padding-left: 6px;
  color: #b4cde8;
  font-size: 13px;
}

.menu-btn svg {
  width: 32px;
  height: 32px;
}

.task-div {
  width: 1px;
  margin: 2px 8px 2px 0;
  background-color: #2a2a2a;
}

.launcher {
  position: relative;
  flex: none;
  display: flex;
  align-items: center;
  justify-content: center;
  width: 38px;
  margin-right: 6px;
  border-bottom: 2px solid transparent;
}

.launcher svg {
  width: 28px;
  height: 28px;
}

.launcher.on {
  border-bottom-color: #2aa54f;
}

.launcher.cur {
  background-color: #4a4a4a;
}

.count {
  position: absolute;
  left: 1px;
  top: 2px;
  z-index: 1;
  width: 15px;
  height: 15px;
  border-radius: 50%;
  background-color: #2f9e44;
  color: #fff;
  font-size: 10px;
  font-style: normal;
  font-weight: 700;
  line-height: 15px;
  text-align: center;
}

.tray {
  display: flex;
  align-items: center;
  gap: 12px;
  margin-left: auto;
  color: #a8c8f0;
}

.tray svg {
  width: 15px;
  height: 15px;
}

.tray .tray-docker {
  width: 24px;
  height: 16px;
}

.clock {
  font-size: 12.5px;
  margin-left: 3px;
}

.show-desk {
  width: 10px;
  height: 41px;
  margin-left: -6px;
  background-color: #222;
}
```
